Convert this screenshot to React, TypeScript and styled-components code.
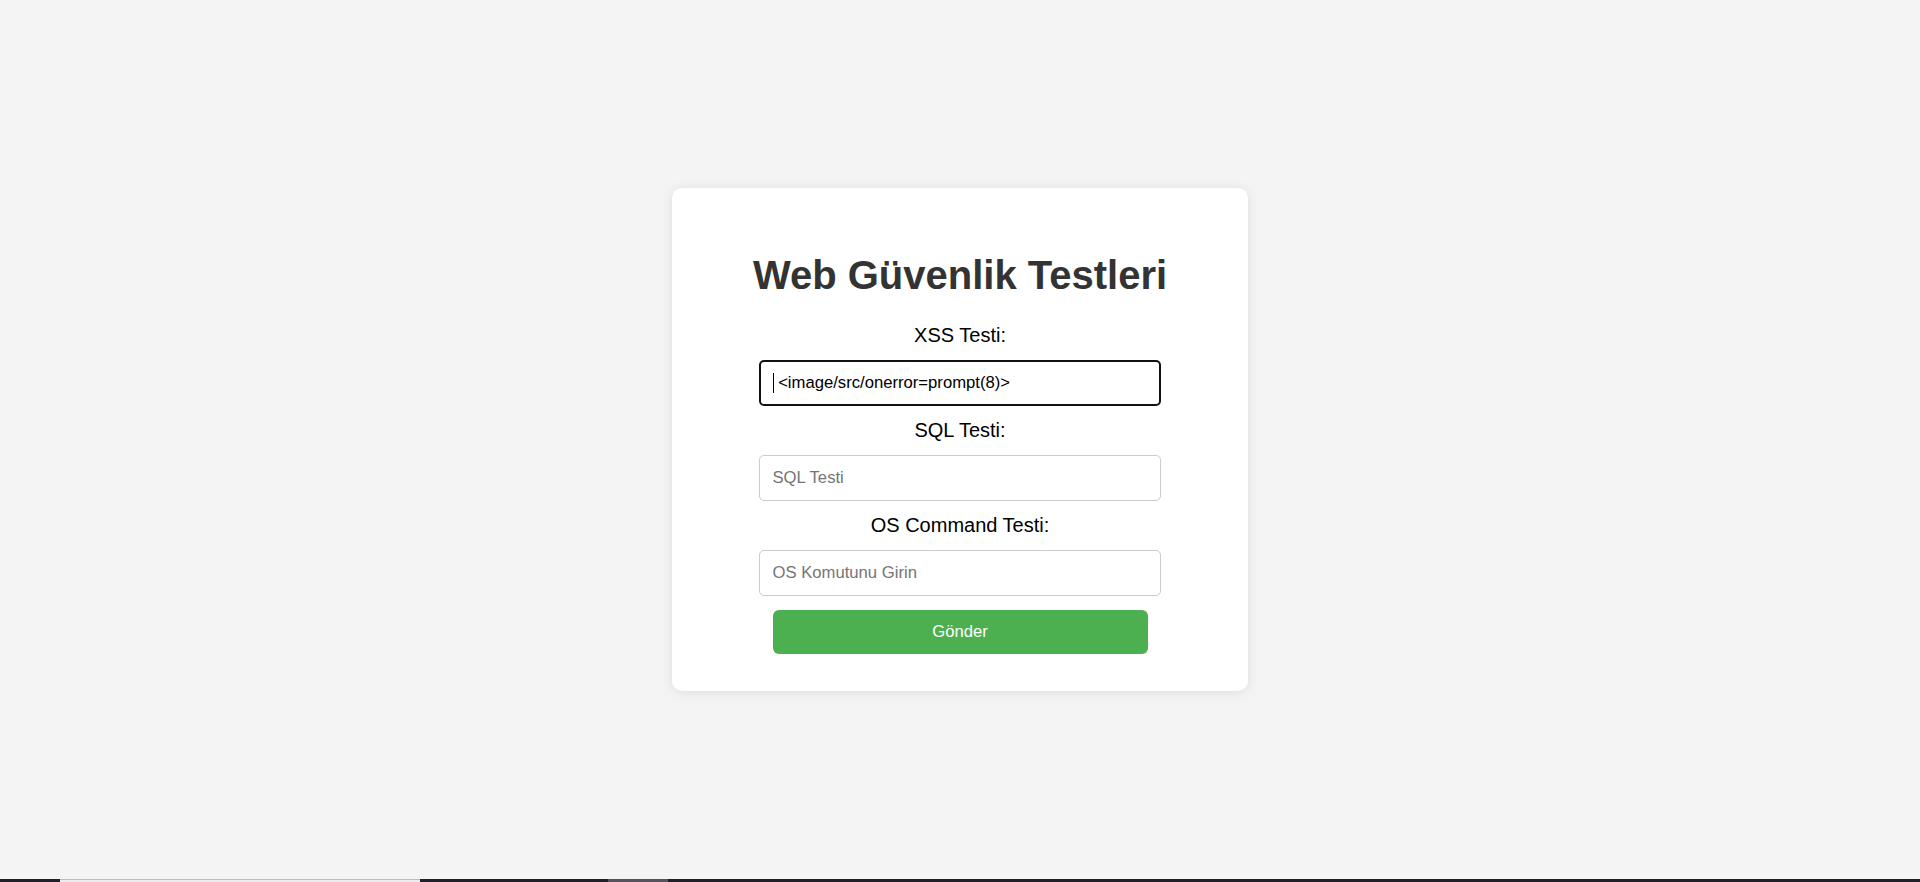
import React from "react";
import styled, { createGlobalStyle } from "styled-components";

const GlobalStyle = createGlobalStyle`
  html, body {
    margin: 0;
    padding: 0;
    background: #f4f4f4;
    font-family: "Liberation Sans", Arial, sans-serif;
  }
  * { box-sizing: border-box; }
`;

const Page = styled.div`
  height: 882px;
  display: flex;
  flex-direction: column;
  overflow: hidden;
`;

const Main = styled.main`
  flex: 1;
  display: flex;
  align-items: center;
  justify-content: center;
`;

const Card = styled.div`
  width: 576px;
  padding: 37.5px 0 37px;
  background: #ffffff;
  border-radius: 10px;
  box-shadow: 0 1px 12px rgba(0, 0, 0, 0.1);
  display: flex;
  flex-direction: column;
  align-items: center;
`;

const Title = styled.h1`
  margin: 26.5px 0 26px;
  font-size: 40px;
  line-height: 46px;
  font-weight: 700;
  color: #333333;
  text-align: center;
`;

const Form = styled.form`
  display: flex;
  flex-direction: column;
  align-items: center;
  gap: 13px;
`;

const Field = styled.div`
  display: flex;
  flex-direction: column;
  align-items: center;
  gap: 13px;
`;

const Label = styled.label`
  display: block;
  font-size: 20px;
  line-height: 23px;
  color: #000000;
  text-align: center;
`;

const InputWrap = styled.div`
  position: relative;
  width: 402px;
`;

const Input = styled.input<{ $focused?: boolean }>`
  display: block;
  width: 100%;
  height: 46px;
  margin: 0;
  padding: 0 12.5px;
  font-family: "Liberation Sans", Arial, sans-serif;
  font-size: 16.67px;
  color: #000000;
  background: #ffffff;
  border: ${(p) => (p.$focused ? "2px solid #111111" : "1.25px solid #cccccc")};
  border-radius: 5px;
  outline: none;

  &::placeholder {
    color: #757575;
  }
`;

const Caret = styled.span`
  position: absolute;
  left: 14px;
  top: 13px;
  width: 1px;
  height: 20px;
  background: #000000;
`;

const SubmitButton = styled.button`
  margin-top: 1px;
  width: 375px;
  height: 44px;
  border: none;
  border-radius: 6px;
  background: #4caf50;
  color: #ffffff;
  font-family: "Liberation Sans", Arial, sans-serif;
  font-size: 16.67px;
  cursor: pointer;
`;

const Taskbar = styled.div`
  height: 3px;
  display: flex;
  background: #1f1e2b;
`;

const TaskSegment = styled.div<{ $width: number; $tone: "dark" | "light" | "mid" }>`
  width: ${(p) => p.$width}px;
  flex: none;
  background: ${(p) =>
    p.$tone === "light" ? "#ececec" : p.$tone === "mid" ? "#56555f" : "#1f1e2b"};
  border-top: ${(p) => (p.$tone === "light" ? "1px solid #bdbdbd" : "none")};
`;

export default function App() {
  return (
    <>
      <GlobalStyle />
      <Page>
        <Main>
          <Card>
            <Title>Web Güvenlik Testleri</Title>
            <Form onSubmit={(e) => e.preventDefault()}>
              <Field>
                <Label htmlFor="xss">XSS Testi:</Label>
                <InputWrap>
                  <Input
                    id="xss"
                    $focused
                    defaultValue=" <image/src/onerror=prompt(8)>"
                    placeholder="XSS Testi"
                  />
                  <Caret />
                </InputWrap>
              </Field>
              <Field>
                <Label htmlFor="sql">SQL Testi:</Label>
                <InputWrap>
                  <Input id="sql" placeholder="SQL Testi" />
                </InputWrap>
              </Field>
              <Field>
                <Label htmlFor="os">OS Command Testi:</Label>
                <InputWrap>
                  <Input id="os" placeholder="OS Komutunu Girin" />
                </InputWrap>
              </Field>
              <SubmitButton type="submit">Gönder</SubmitButton>
            </Form>
          </Card>
        </Main>
        <Taskbar>
          <TaskSegment $width={60} $tone="dark" />
          <TaskSegment $width={360} $tone="light" />
          <TaskSegment $width={188} $tone="dark" />
          <TaskSegment $width={60} $tone="mid" />
        </Taskbar>
      </Page>
    </>
  );
}
